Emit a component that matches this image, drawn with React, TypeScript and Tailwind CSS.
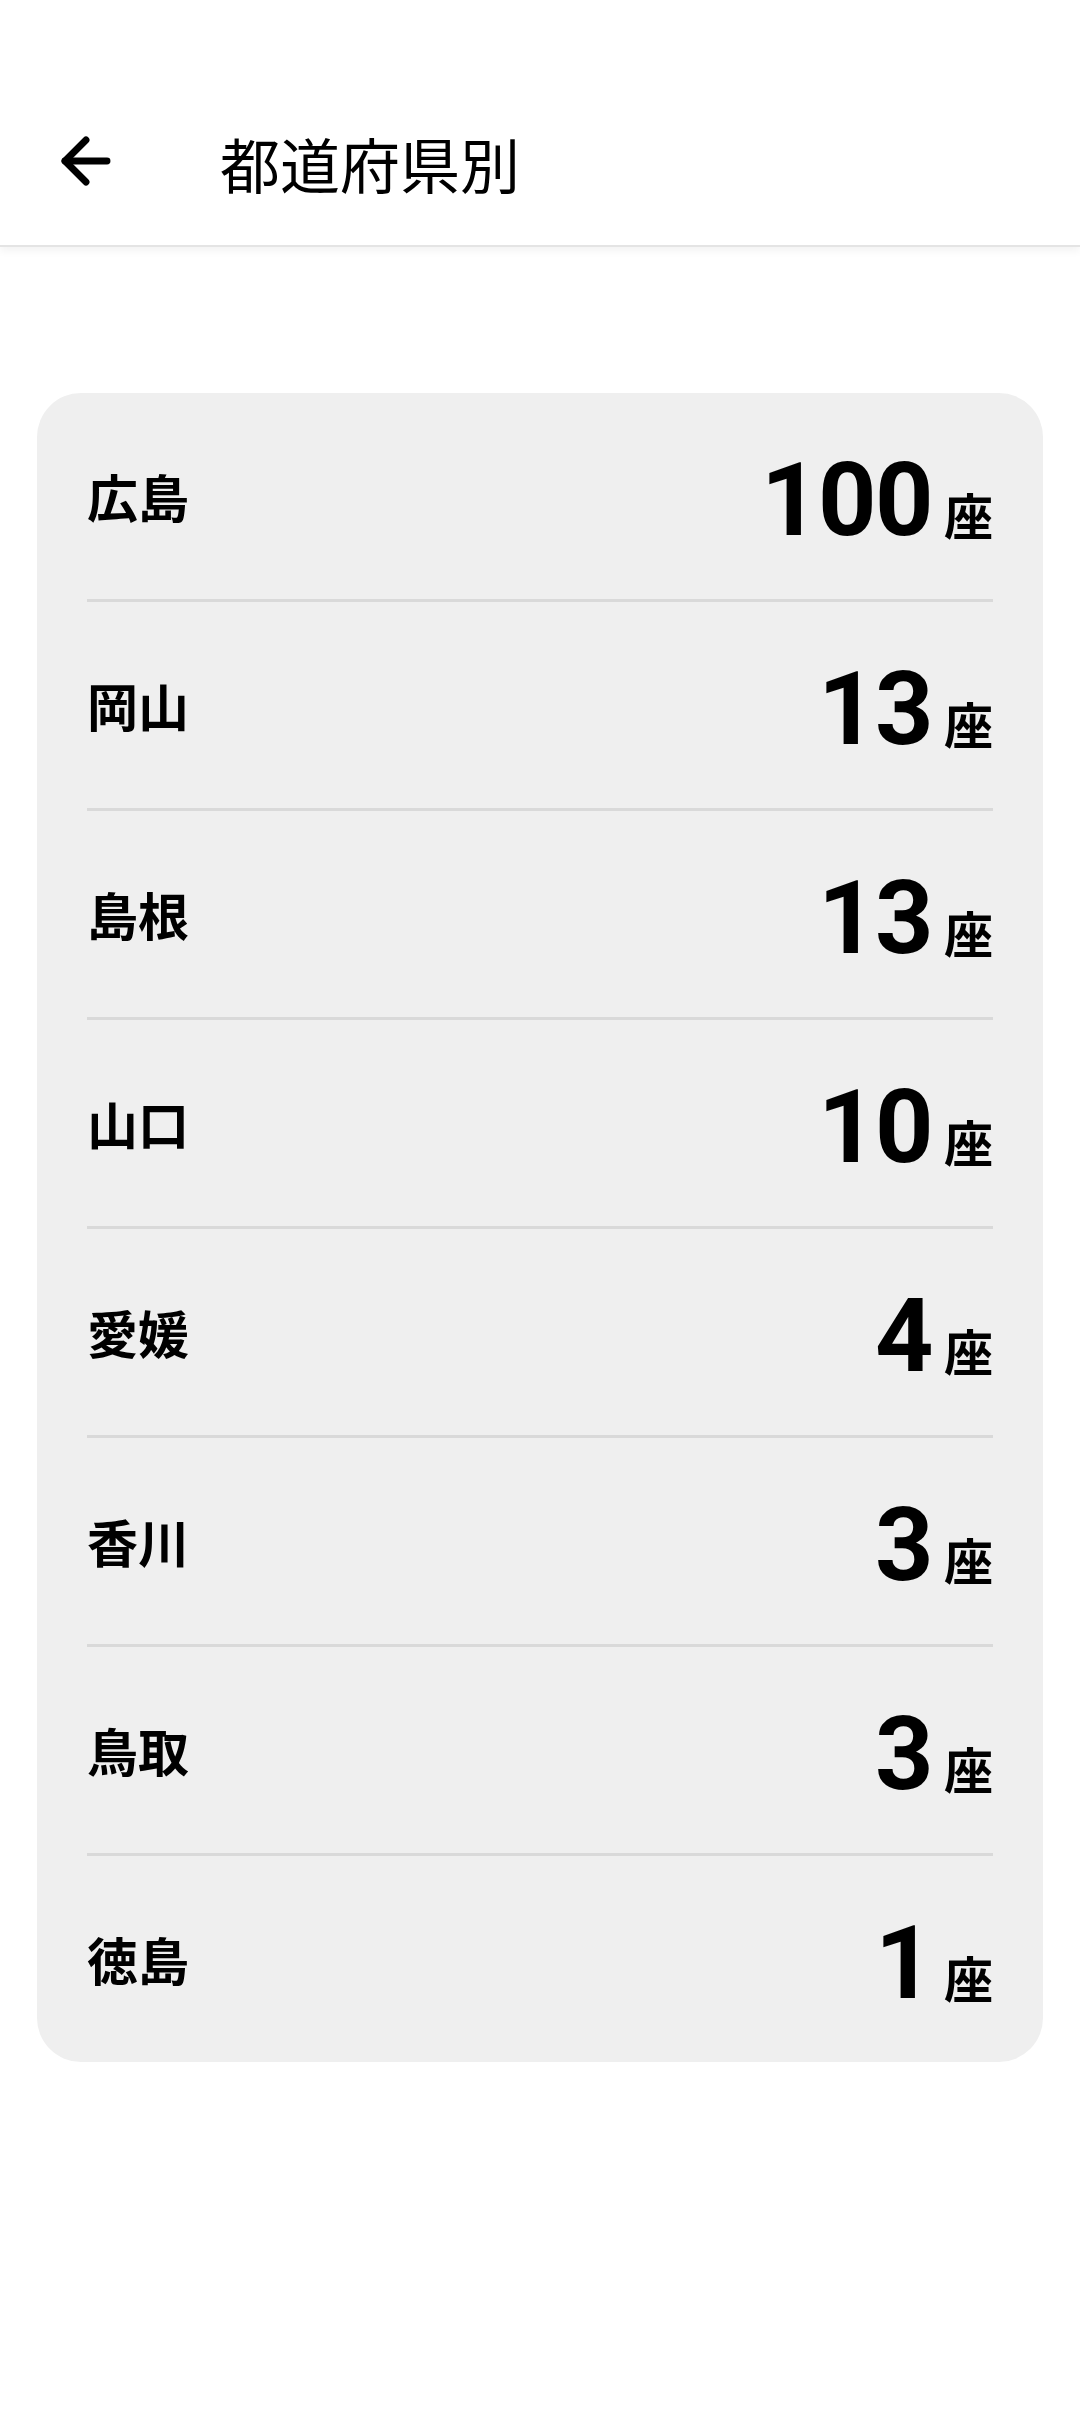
import React from "react";

const rows: { name: string; count: number }[] = [
  { name: "広島", count: 100 },
  { name: "岡山", count: 13 },
  { name: "島根", count: 13 },
  { name: "山口", count: 10 },
  { name: "愛媛", count: 4 },
  { name: "香川", count: 3 },
  { name: "鳥取", count: 3 },
  { name: "徳島", count: 1 },
];

const cjk = { fontFamily: '"Noto Sans CJK JP", "Noto Sans", sans-serif' };
const num = { fontFamily: 'Roboto, "Noto Sans", sans-serif' };

export default function App() {
  return (
    <div className="w-[1080px] min-h-[2432px] bg-white" style={cjk}>
      <header className="h-[247px] pt-[76px] flex items-center bg-white border-b-2 border-[#e4e4e4] shadow-[0_4px_8px_rgba(0,0,0,0.05)]">
        <div className="w-[72px] h-[72px] ml-[50px] flex items-center justify-center">
          <svg width="72" height="72" viewBox="0 0 24 24" fill="none" stroke="#000" strokeWidth="2.3" strokeLinecap="round" strokeLinejoin="round">
            <path d="m12 19-7-7 7-7" />
            <path d="M19 12H5" />
          </svg>
        </div>
        <h1 className="ml-[98px] text-[60px] leading-none font-normal text-[#000] mt-[4px]" style={cjk}>
          都道府県別
        </h1>
      </header>
      <div className="mt-[146px] mx-[37px] rounded-[44px] bg-[#efefef] px-[50px]">
        {rows.map((r, i) => (
          <div key={r.name}>
            {i > 0 && <div className="h-[3px] bg-[#d9d9d9]" />}
            <div className="h-[206px] flex items-center justify-between">
              <span className="text-[51px] font-bold leading-none text-[#000]" style={cjk}>
                {r.name}
              </span>
              <div className="flex items-baseline mt-[8px]">
                <span className="text-[102px] font-bold leading-none text-[#000] tracking-[-1.5px]" style={num}>
                  {r.count}
                </span>
                <span className="ml-[12px] text-[49px] font-bold leading-none text-[#000]" style={cjk}>
                  座
                </span>
              </div>
            </div>
          </div>
        ))}
      </div>
    </div>
  );
}
